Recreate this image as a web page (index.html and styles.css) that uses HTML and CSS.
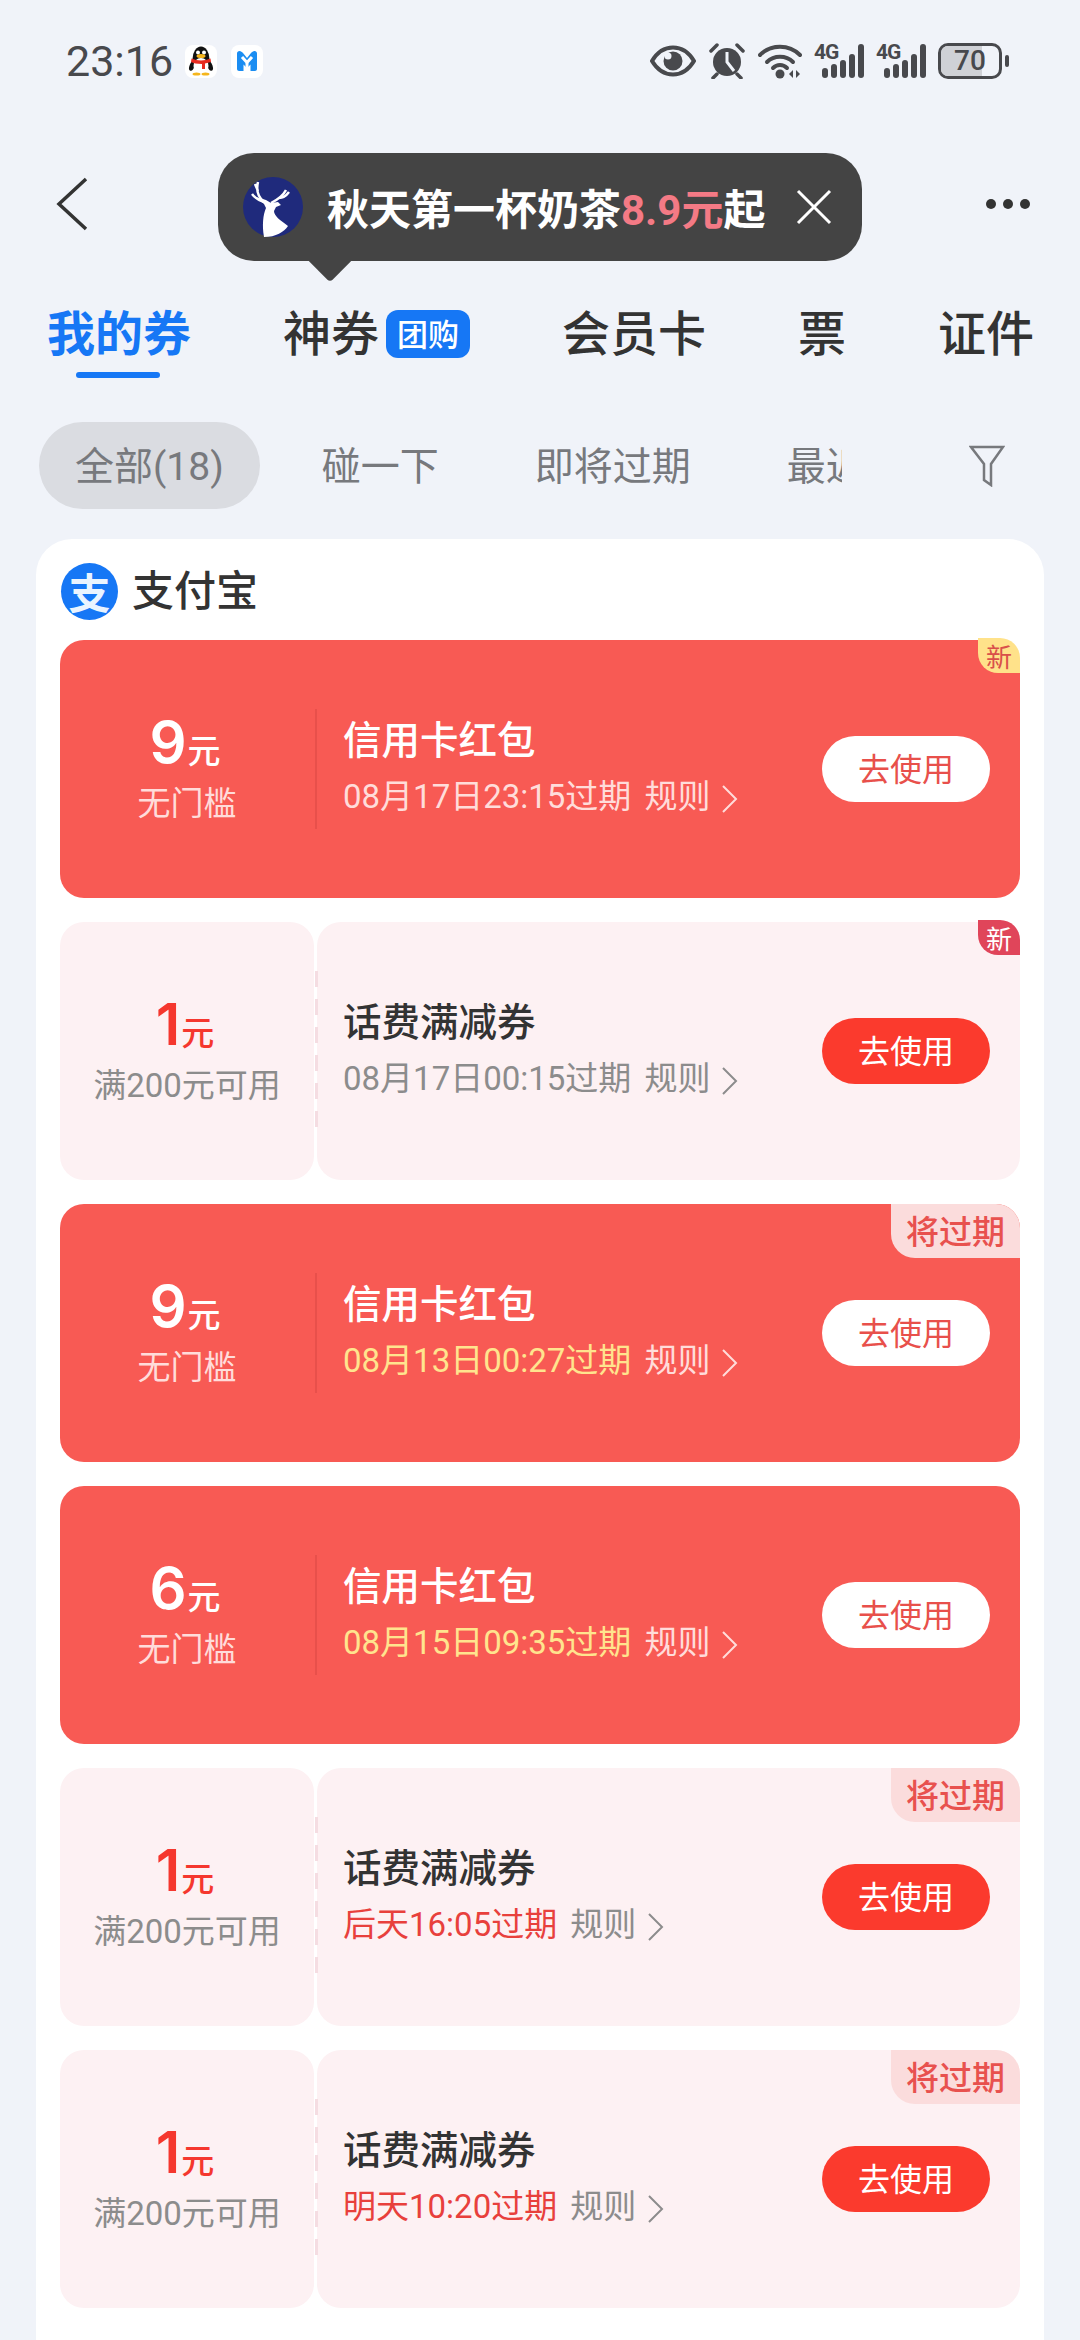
FILE: index.html
```html
<!DOCTYPE html>
<html lang="zh-CN">
<head>
    <meta charset="UTF-8">
    <meta name="viewport" content="width=device-width, initial-scale=1.0">
    <title>我的券</title>
    <link rel="stylesheet" href="styles.css">
</head>
<body>
<div class="page">

    <div class="status-bar">
        <span class="clock">23:16</span>
        <span class="app-icon">
            <svg width="26" height="30" viewBox="0 0 26 30">
                <ellipse cx="13" cy="13" rx="8.500" ry="12.500" fill="#111"/>
                <ellipse cx="4" cy="20" rx="2.500" ry="5" fill="#111" transform="rotate(20 4 20)"/>
                <ellipse cx="22" cy="20" rx="2.500" ry="5" fill="#111" transform="rotate(-20 22 20)"/>
                <ellipse cx="13" cy="20" rx="7.500" ry="8" fill="#fff"/>
                <circle cx="10" cy="6.500" r="2" fill="#fff"/>
                <circle cx="16" cy="6.500" r="2" fill="#fff"/>
                <ellipse cx="13" cy="10" rx="4.500" ry="2" fill="#f5b51c"/>
                <path d="M3.500 12.500c6 2.500 13 2.500 19 0l.5 3.500-6 1.500V23h-3v-5C9 18 5 17 3 16z" fill="#e62b20"/>
                <ellipse cx="8.500" cy="28" rx="4" ry="1.600" fill="#f5b51c"/>
                <ellipse cx="17.500" cy="28" rx="4" ry="1.600" fill="#f5b51c"/>
            </svg>
        </span>
        <span class="app-icon">
            <svg width="20" height="20" viewBox="0 0 20 20">
                <path d="M0 2.500C0 1 1 0 2.500 0 4 0 5 1 6 2l4 5 4-5c1-1 2-2 3.500-2C19 0 20 1 20 2.500V18c0 1-1 2-2 2h-4.500v-6.500L10 17l-3.500-3.500V20H2c-1 0-2-1-2-2z" fill="#1b8df2"/>
                <path d="M5 6l5 5.500L15 6" fill="none" stroke="#fff" stroke-width="3"/>
                <path d="M10 12v8" stroke="#fff" stroke-width="3"/>
            </svg>
        </span>
        <div class="status-right">
            <svg width="46" height="32" viewBox="0 0 46 32">
                <path d="M2 16C8 6 15 2.500 23 2.500S38 6 44 16c-6 10-13 13.500-21 13.500S8 26 2 16z" fill="none" stroke="#48494d" stroke-width="4"/>
                <circle cx="23" cy="16" r="9.500" fill="#48494d"/>
                <circle cx="18" cy="11" r="3.500" fill="#f0f3f9"/>
            </svg>
            <svg width="38" height="36" viewBox="0 0 38 36">
                <circle cx="19" cy="19" r="14" fill="#48494d"/>
                <path d="M19 9v10l7 9" fill="none" stroke="#f0f3f9" stroke-width="3"/>
                <path d="M3 8l6-6M35 8l-6-6M9 31l-4 4M29 31l4 4" stroke="#48494d" stroke-width="3.500" stroke-linecap="round"/>
            </svg>
            <svg width="44" height="36" viewBox="0 0 44 36">
                <path d="M2 12C13 1 31 1 42 12" fill="none" stroke="#48494d" stroke-width="4" stroke-linecap="round"/>
                <path d="M9 19c7-7 19-7 26 0" fill="none" stroke="#48494d" stroke-width="4" stroke-linecap="round"/>
                <path d="M15 25c4-4 10-4 14 0" fill="none" stroke="#48494d" stroke-width="4" stroke-linecap="round"/>
                <circle cx="22" cy="31" r="4.500" fill="#48494d"/>
                <path d="M35 27v8l-4-4zM38 27v8l4-4z" fill="#48494d"/>
            </svg>
            <div class="signal">
                <span class="signal-label">4G</span>
                <span class="bar h1"></span><span class="bar h2"></span><span class="bar h3"></span><span class="bar h4"></span><span class="bar h5"></span>
            </div>
            <div class="signal">
                <span class="signal-label">4G</span>
                <span class="bar h1"></span><span class="bar h2"></span><span class="bar h3"></span><span class="bar h4"></span><span class="bar h5"></span>
            </div>
            <div class="battery">
                <div class="battery-body"><span class="battery-fill"></span><span class="battery-text">70</span></div>
                <span class="battery-tip"></span>
            </div>
        </div>
    </div>

    <div class="nav-bar">
        <svg class="back" width="34" height="54" viewBox="0 0 34 54">
            <path d="M31 2L4 27l27 25" fill="none" stroke="#333" stroke-width="3.500"/>
        </svg>
        <div class="more"><span></span><span></span><span></span></div>

        <div class="promo-tip">
            <svg width="60" height="60" viewBox="0 0 60 60">
                <circle cx="30" cy="30" r="30" fill="#1f2a7c"/>
                <path d="M21 60c-2-12-1-22 2-29l-2-4-8-7 10 3 5 3 7-1 3 3-5 2-2 4c0 5 6 9 14 15-4 6-12 11-24 11z" fill="#fff"/>
                <path d="M21 25C15 20 13 13 15 5M21 25c-3-1-9-4-12-8M15 14l-3-7M28 26c6-3 12-7 15-13M36 21c3 0 7-2 10-6" fill="none" stroke="#fff" stroke-width="2.500"/>
            </svg>
            <span class="promo-text">秋天第一杯奶茶<em>8.9元</em>起</span>
            <svg class="promo-close" width="36" height="36" viewBox="0 0 36 36">
                <path d="M2 2l32 32M34 2L2 34" stroke="#fff" stroke-width="3"/>
            </svg>
        </div>
    </div>

    <div class="tabs">
        <div class="tab active">我的券</div>
        <div class="tab">神券<span class="tab-badge">团购</span></div>
        <div class="tab">会员卡</div>
        <div class="tab">票</div>
        <div class="tab">证件</div>
    </div>

    <div class="filters">
        <div class="filter-scroll">
            <span class="filter selected">全部(18)</span>
            <span class="filter">碰一下</span>
            <span class="filter">即将过期</span>
            <span class="filter">最近</span>
        </div>
        <svg class="filter-icon" width="36" height="42" viewBox="0 0 36 42">
            <path d="M2 2h32L22 19v21l-7-5V19z" fill="none" stroke="#77797d" stroke-width="2.500"/>
        </svg>
    </div>

    <div class="card">
        <div class="card-head">
            <span class="alipay-logo">支</span>
            <span class="card-name">支付宝</span>
        </div>

        <div class="coupon red">
            <span class="tag tag-new">新</span>
            <div class="coupon-left">
                <div class="amount"><b>9</b>元</div>
                <div class="limit">无门槛</div>
            </div>
            <div class="coupon-right">
                <div class="info">
                    <div class="coupon-title">信用卡红包</div>
                    <div class="coupon-date"><span>08月17日23:15过期</span><span class="rule">规则</span>
                        <svg width="18" height="30" viewBox="0 0 18 30"><path d="M2 2l13 13L2 28" fill="none" stroke="currentColor" stroke-width="2"/></svg>
                    </div>
                </div>
                <div class="use-btn">去使用</div>
            </div>
        </div>

        <div class="coupon light">
            <span class="tag tag-new">新</span>
            <div class="coupon-left">
                <div class="amount"><b>1</b>元</div>
                <div class="limit">满200元可用</div>
            </div>
            <div class="coupon-right">
                <div class="info">
                    <div class="coupon-title">话费满减券</div>
                    <div class="coupon-date"><span>08月17日00:15过期</span><span class="rule">规则</span>
                        <svg width="18" height="30" viewBox="0 0 18 30"><path d="M2 2l13 13L2 28" fill="none" stroke="currentColor" stroke-width="2"/></svg>
                    </div>
                </div>
                <div class="use-btn">去使用</div>
            </div>
        </div>

        <div class="coupon red">
            <span class="tag tag-soon">将过期</span>
            <div class="coupon-left">
                <div class="amount"><b>9</b>元</div>
                <div class="limit">无门槛</div>
            </div>
            <div class="coupon-right">
                <div class="info">
                    <div class="coupon-title">信用卡红包</div>
                    <div class="coupon-date"><span class="expiring">08月13日00:27过期</span><span class="rule">规则</span>
                        <svg width="18" height="30" viewBox="0 0 18 30"><path d="M2 2l13 13L2 28" fill="none" stroke="currentColor" stroke-width="2"/></svg>
                    </div>
                </div>
                <div class="use-btn">去使用</div>
            </div>
        </div>

        <div class="coupon red">
            <div class="coupon-left">
                <div class="amount"><b>6</b>元</div>
                <div class="limit">无门槛</div>
            </div>
            <div class="coupon-right">
                <div class="info">
                    <div class="coupon-title">信用卡红包</div>
                    <div class="coupon-date"><span class="expiring">08月15日09:35过期</span><span class="rule">规则</span>
                        <svg width="18" height="30" viewBox="0 0 18 30"><path d="M2 2l13 13L2 28" fill="none" stroke="currentColor" stroke-width="2"/></svg>
                    </div>
                </div>
                <div class="use-btn">去使用</div>
            </div>
        </div>

        <div class="coupon light">
            <span class="tag tag-soon">将过期</span>
            <div class="coupon-left">
                <div class="amount"><b>1</b>元</div>
                <div class="limit">满200元可用</div>
            </div>
            <div class="coupon-right">
                <div class="info">
                    <div class="coupon-title">话费满减券</div>
                    <div class="coupon-date"><span class="expiring">后天16:05过期</span><span class="rule">规则</span>
                        <svg width="18" height="30" viewBox="0 0 18 30"><path d="M2 2l13 13L2 28" fill="none" stroke="currentColor" stroke-width="2"/></svg>
                    </div>
                </div>
                <div class="use-btn">去使用</div>
            </div>
        </div>

        <div class="coupon light">
            <span class="tag tag-soon">将过期</span>
            <div class="coupon-left">
                <div class="amount"><b>1</b>元</div>
                <div class="limit">满200元可用</div>
            </div>
            <div class="coupon-right">
                <div class="info">
                    <div class="coupon-title">话费满减券</div>
                    <div class="coupon-date"><span class="expiring">明天10:20过期</span><span class="rule">规则</span>
                        <svg width="18" height="30" viewBox="0 0 18 30"><path d="M2 2l13 13L2 28" fill="none" stroke="currentColor" stroke-width="2"/></svg>
                    </div>
                </div>
                <div class="use-btn">去使用</div>
            </div>
        </div>
    </div>

</div>
</body>
</html>
```

FILE: styles.css
```css
* {
    box-sizing: border-box;
    margin: 0;
    padding: 0;
}
body {
    background-color: #f0f3f9;
    font-family: Roboto, "Noto Sans CJK SC", sans-serif;
    color: #333;
}
.page {
    display: flex;
    flex-direction: column;
    width: 1080px;
    height: 2340px;
    overflow: hidden;
}

/* status bar */
.status-bar {
    display: flex;
    align-items: center;
    height: 122px;
    padding: 0 71px 0 66px;
    color: #48494d;
}
.clock {
    font-size: 43px;
    margin-right: 12px;
}
.app-icon {
    display: flex;
    align-items: center;
    justify-content: center;
    width: 32px;
    height: 33px;
    margin-right: 14px;
    background-color: #fff;
    border-radius: 8px;
}
.status-right {
    display: flex;
    align-items: center;
    gap: 12px;
    margin-left: auto;
}
.signal {
    display: flex;
    align-items: flex-end;
    gap: 3px;
    position: relative;
    width: 50px;
    height: 34px;
    justify-content: flex-end;
}
.signal-label {
    position: absolute;
    left: 0;
    top: -2px;
    font-size: 21px;
    font-weight: 700;
    letter-spacing: -1px;
    line-height: 20px;
}
.bar {
    width: 6px;
    background-color: #48494d;
    border-radius: 3px;
}
.h1 { height: 10px; }
.h2 { height: 14px; }
.h3 { height: 18px; }
.h4 { height: 24px; }
.h5 { height: 34px; }
.battery {
    display: flex;
    align-items: center;
    gap: 3px;
}
.battery-body {
    position: relative;
    display: flex;
    align-items: center;
    justify-content: center;
    width: 64px;
    height: 36px;
    border: 3px solid #48494d;
    border-radius: 10px;
    overflow: hidden;
}
.battery-fill {
    position: absolute;
    left: 0;
    top: 0;
    bottom: 0;
    width: 70%;
    background-color: #cfd1d6;
}
.battery-text {
    position: relative;
    font-size: 28px;
    font-weight: 500;
    line-height: 1;
}
.battery-tip {
    width: 4px;
    height: 12px;
    background-color: #48494d;
    border-radius: 2px;
}

/* nav */
.nav-bar {
    position: relative;
    display: flex;
    align-items: center;
    justify-content: space-between;
    height: 164px;
    padding: 0 50px 0 55px;
}
.more {
    display: flex;
    gap: 7px;
}
.more span {
    width: 10px;
    height: 10px;
    background-color: #333;
    border-radius: 50%;
}
.promo-tip {
    position: absolute;
    left: 218px;
    top: 31px;
    display: flex;
    align-items: center;
    width: 644px;
    height: 108px;
    padding-left: 25px;
    background-color: #444;
    border-radius: 36px;
}
.promo-tip::after {
    content: "";
    position: absolute;
    left: 97px;
    bottom: -15px;
    width: 30px;
    height: 30px;
    background-color: #444;
    border-bottom-right-radius: 4px;
    transform: rotate(45deg);
}
.promo-text {
    margin-left: 24px;
    padding-bottom: 2px;
    font-size: 42px;
    font-weight: 700;
    color: #fff;
    white-space: nowrap;
}
.promo-text em {
    font-style: normal;
    color: #f47a85;
}
.promo-close {
    margin-left: 31px;
}

/* tabs */
.tabs {
    display: flex;
    gap: 92px;
    height: 100px;
    padding-left: 47px;
}
.tab {
    position: relative;
    display: flex;
    align-items: center;
    height: 92px;
    padding-bottom: 5px;
    font-size: 48px;
    font-weight: 500;
    color: #333;
}
.tab.active {
    color: #1677f5;
    font-weight: 700;
}
.tab.active::after {
    content: "";
    position: absolute;
    left: 29px;
    bottom: 0;
    width: 84px;
    height: 6px;
    background-color: #1677f5;
    border-radius: 3px;
}
.tab-badge {
    display: flex;
    align-items: center;
    justify-content: center;
    width: 84px;
    height: 48px;
    margin: 8px 0 0 7px;
    padding-bottom: 2px;
    font-size: 31px;
    font-weight: 500;
    color: #fff;
    background-color: #1677f5;
    border-radius: 12px;
}

/* filters */
.filters {
    display: flex;
    align-items: center;
    height: 87px;
    margin-top: 36px;
    padding-left: 39px;
}
.filter-scroll {
    display: flex;
    align-items: center;
    gap: 96px;
    width: 803px;
    height: 100%;
    overflow: hidden;
}
.filter {
    flex: none;
    display: flex;
    align-items: center;
    height: 87px;
    padding-bottom: 6px;
    font-size: 39px;
    color: #77797d;
}
.filter.selected {
    margin-right: -34px;
    padding: 0 36px 6px;
    background-color: #dadce1;
    border-radius: 44px;
}
.filter-icon {
    margin-left: 127px;
}

/* card */
.card {
    flex: 1;
    margin: 30px 36px 0;
    padding: 24px 24px 0;
    background-color: #fff;
    border-radius: 36px 36px 0 0;
}
.card-head {
    display: flex;
    align-items: flex-start;
    height: 77px;
}
.alipay-logo {
    display: flex;
    align-items: center;
    justify-content: center;
    width: 57px;
    height: 57px;
    margin-left: 1px;
    padding-bottom: 3px;
    font-size: 42px;
    font-weight: 700;
    color: #eaf4ff;
    background-color: #1677f5;
    border-radius: 50%;
}
.card-name {
    margin-left: 14px;
    font-size: 42px;
    font-weight: 500;
    line-height: 57px;
}

/* coupons */
.coupon {
    position: relative;
    display: flex;
    height: 258px;
    margin-bottom: 24px;
    border-radius: 24px;
}
.coupon-left {
    display: flex;
    flex-direction: column;
    align-items: center;
    justify-content: center;
    width: 254px;
    padding-bottom: 2px;
    border-radius: 24px;
}
.coupon-right {
    position: relative;
    flex: 1;
    display: flex;
    align-items: center;
    justify-content: space-between;
    margin-left: 3px;
    padding: 0 30px 0 26px;
    border-radius: 24px;
}
.coupon-right::before {
    content: "";
    position: absolute;
    left: -2px;
    top: 50%;
    transform: translateY(-50%);
}
.amount {
    display: flex;
    align-items: baseline;
    padding-right: 4px;
    font-size: 33px;
    line-height: 62px;
    font-weight: 500;
}
.amount b {
    margin-right: 1px;
    font-family: Inter, Roboto, sans-serif;
    font-size: 58px;
    font-weight: 600;
}
.limit {
    font-size: 33px;
    line-height: 42px;
}
.info {
    padding-bottom: 2px;
}
.coupon-title {
    font-size: 38.500px;
    font-weight: 500;
    line-height: 50px;
}
.coupon-date {
    display: flex;
    align-items: center;
    margin-top: 8px;
    font-size: 33px;
    line-height: 46px;
}
.rule {
    margin: 0 11px 0 13px;
}
.coupon-date svg {
    margin-top: 4px;
}
.use-btn {
    display: flex;
    align-items: center;
    justify-content: center;
    width: 168px;
    height: 66px;
    padding-bottom: 5px;
    font-size: 32px;
    border-radius: 33px;
}

.coupon.red {
    color: #fff;
    background-color: #f85a54;
}
.red .coupon-right::before {
    width: 2px;
    height: 120px;
    background-color: #e8504b;
}
.red .limit,
.red .coupon-date {
    color: #ffdcda;
}
.red .expiring {
    color: #ffe48e;
}
.red .use-btn {
    color: #e8504b;
    background-color: #fff;
}

.light .coupon-left,
.light .coupon-right {
    background-color: #fdf1f3;
}
.light .coupon-right::before {
    width: 3px;
    height: 160px;
    background-image: repeating-linear-gradient(#f5dde2 0, #f5dde2 16px, transparent 16px, transparent 28px);
}
.light .amount {
    color: #f5372e;
}
.light .limit,
.light .coupon-date {
    color: #8c8c8c;
}
.light .expiring {
    color: #e8403c;
}
.light .use-btn {
    color: #fff;
    background-color: #fb3a2d;
}

/* corner tags */
.tag {
    position: absolute;
    right: 0;
    top: 0;
    z-index: 1;
    display: flex;
    align-items: center;
    justify-content: center;
    border-radius: 0 24px 0 24px;
}
.tag-new {
    top: -2px;
    width: 42px;
    height: 35px;
    font-size: 26px;
    border-radius: 0 20px 0 20px;
}
.red .tag-new {
    color: #d9504a;
    background-color: #ffe28a;
}
.light .tag-new {
    color: #fff;
    background-color: #e0455a;
}
.tag-soon {
    width: 129px;
    height: 54px;
    padding-bottom: 2px;
    font-size: 33px;
    font-weight: 500;
    color: #e8514e;
    background-color: #fbdcdc;
}
```
